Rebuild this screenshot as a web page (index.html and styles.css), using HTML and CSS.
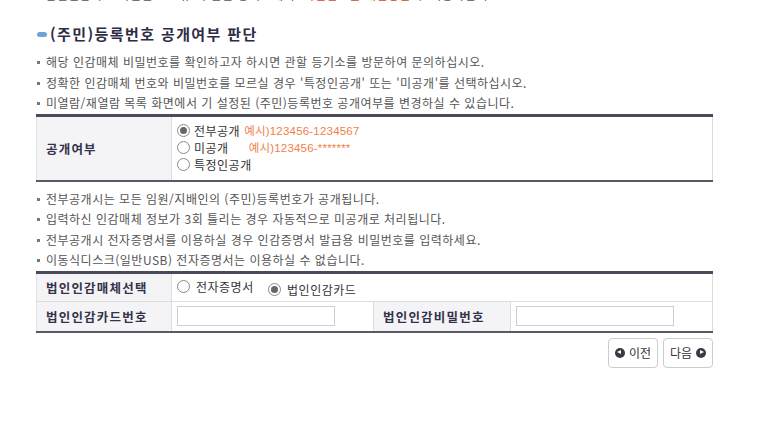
FILE: index.html
```html
<!DOCTYPE html>
<html lang="ko">
<head>
    <meta charset="UTF-8">
    <title>(주민)등록번호 공개여부 판단</title>
    <link rel="stylesheet" href="styles.css">
</head>
<body>
    <div class="page">
        <p class="cut-line"><span class="dot"></span>법인인감카드 비밀번호 오류 시 관할 등기소에서 <em>비밀번호를 재설정한 후</em> 이용하십시오.</p>

        <h3 class="sec-title"><span class="pill"></span>(주민)등록번호 공개여부 판단</h3>

        <ul class="notes">
            <li>해당 인감매체 비밀번호를 확인하고자 하시면 관할 등기소를 방문하여 문의하십시오.</li>
            <li>정확한 인감매체 번호와 비밀번호를 모르실 경우 '특정인공개' 또는 '미공개'를 선택하십시오.</li>
            <li>미열람/재열람 목록 화면에서 기 설정된 (주민)등록번호 공개여부를 변경하실 수 있습니다.</li>
        </ul>

        <table class="form-table open-table">
            <colgroup>
                <col class="c-label">
                <col>
            </colgroup>
            <tr>
                <th>공개여부</th>
                <td>
                    <label class="opt"><input type="radio" name="open" checked>전부공개 <span class="ex">예시)123456-1234567</span></label>
                    <label class="opt"><input type="radio" name="open">미공개 <span class="ex ex2">예시)123456-*******</span></label>
                    <label class="opt"><input type="radio" name="open">특정인공개</label>
                </td>
            </tr>
        </table>

        <ul class="notes notes2">
            <li>전부공개시는 모든 임원/지배인의 (주민)등록번호가 공개됩니다.</li>
            <li>입력하신 인감매체 정보가 3회 틀리는 경우 자동적으로 미공개로 처리됩니다.</li>
            <li>전부공개시 전자증명서를 이용하실 경우 인감증명서 발급용 비밀번호를 입력하세요.</li>
            <li>이동식디스크(일반USB) 전자증명서는 이용하실 수 없습니다.</li>
        </ul>

        <table class="form-table card-table">
            <colgroup>
                <col class="c-label">
                <col class="c-field">
                <col class="c-label2">
                <col>
            </colgroup>
            <tr class="row-media">
                <th>법인인감매체선택</th>
                <td colspan="3" class="media">
                    <label class="opt-inline"><input type="radio" name="media">전자증명서</label>
                    <label class="opt-inline"><input type="radio" name="media" checked>법인인감카드</label>
                </td>
            </tr>
            <tr class="row-card">
                <th>법인인감카드번호</th>
                <td class="field"><input type="text" class="txt"></td>
                <th class="th2">법인인감비밀번호</th>
                <td class="field"><input type="password" class="txt"></td>
            </tr>
        </table>

        <div class="btns">
            <button class="btn"><span class="ico prev"></span>이전</button>
            <button class="btn">다음<span class="ico next"></span></button>
        </div>
    </div>
</body>
</html>
```

FILE: styles.css
```css
body {
    margin: 0;
    font-family: "Noto Sans CJK KR", "Noto Sans", sans-serif;
    font-size: 12px;
    color: #555;
    background-color: #fff;
}

.page {
    width: 677px;
    padding-left: 36px;
}

.cut-line {
    margin: -15px 0 0;
    height: 20px;
    line-height: 20px;
    display: flex;
    align-items: center;
    white-space: nowrap;
    letter-spacing: 0.5px;
}

.cut-line em {
    font-style: normal;
    color: #d04a30;
    margin: 0 4px 0 8px;
}

.dot {
    display: inline-block;
    width: 3px;
    height: 3px;
    background-color: #777;
    margin-right: 6px;
}

.sec-title {
    margin: 18px 0 0;
    height: 22px;
    line-height: 22px;
    font-size: 15px;
    font-weight: bold;
    color: #2e2c44;
    letter-spacing: 1.4px;
    display: flex;
    align-items: center;
}

.pill {
    display: inline-block;
    width: 10px;
    height: 5px;
    border-radius: 3px;
    background-color: #6fa3d8;
    margin: 0 3px 0 1px;
}

.notes {
    list-style: none;
    margin: 7px 0 0;
    padding: 0;
}

.notes li {
    height: 20.5px;
    line-height: 20px;
    padding-left: 10px;
    position: relative;
    letter-spacing: 0.5px;
    white-space: nowrap;
}

.notes li::before {
    content: "";
    position: absolute;
    left: 1px;
    top: 9px;
    width: 3px;
    height: 3px;
    background-color: #777;
}

.notes2 {
    margin-top: 7px;
}

/* form tables */
.form-table {
    width: 677px;
    table-layout: fixed;
    border-collapse: collapse;
    border-top: 3px solid #4b4a5b;
    border-bottom: 2px solid #5a5a66;
    border-right: 1px solid #dcdcdc;
}

.c-label {
    width: 135px;
}

.c-field {
    width: 202px;
}

.c-label2 {
    width: 137px;
}

.form-table th {
    background-color: #f4f4f6;
    border-left: 1px solid #e2e2e6;
    border-right: 1px solid #dcdcdc;
    text-align: left;
    padding: 0 0 0 9px;
    font-size: 12.5px;
    font-weight: bold;
    color: #33324a;
    letter-spacing: 1.2px;
    white-space: nowrap;
}

.form-table td {
    padding: 0 5px;
}

.open-table td {
    padding: 5px 5px 7px;
}

.opt {
    display: flex;
    align-items: center;
    height: 17px;
    font-size: 12px;
    color: #333;
    letter-spacing: 0.5px;
    white-space: nowrap;
}

.ex {
    font-size: 11.5px;
    color: #f07f4a;
    margin-left: 4px;
    letter-spacing: 0.2px;
    font-family: "Liberation Sans", "Noto Sans CJK KR", sans-serif;
}

.ex2 {
    margin-left: 20px;
}

input[type="radio"] {
    appearance: none;
    width: 13px;
    height: 13px;
    margin: 0 4px 0 0;
    border: 1px solid #8a8a8a;
    border-radius: 50%;
    background: #fff;
    box-sizing: border-box;
    display: inline-flex;
    align-items: center;
    justify-content: center;
}

input[type="radio"]:checked::after {
    content: "";
    width: 7px;
    height: 7px;
    border-radius: 50%;
    background-color: #666;
}

.row-media th,
.row-media td {
    height: 26px;
    border-bottom: 1px solid #dcdcdc;
}

.row-card th,
.row-card td {
    height: 29px;
}

.form-table .media {
    padding: 1px 5px 0 5px;
}

.opt-inline {
    display: inline-flex;
    align-items: center;
    margin-right: 11px;
    color: #333;
    font-size: 12px;
    letter-spacing: 0.5px;
}

.opt-inline input {
    margin-right: 6px;
}

.form-table .field {
    padding-left: 5px;
}

.form-table .th2 {
    border-left: 1px solid #dcdcdc;
}

.txt {
    width: 158px;
    height: 20px;
    border: 1px solid #cfcfcf;
    box-sizing: border-box;
    display: block;
}

.btns {
    display: flex;
    justify-content: flex-end;
    gap: 5px;
    margin-top: 5px;
}

.btn {
    width: 50px;
    height: 30px;
    border: 1px solid #cccccc;
    border-radius: 4px;
    background-color: #fff;
    font-family: "Noto Sans CJK KR", sans-serif;
    font-size: 12px;
    color: #333;
    display: flex;
    align-items: center;
    justify-content: center;
    gap: 4px;
    padding: 0;
}

.ico {
    width: 10px;
    height: 10px;
    border-radius: 50%;
    background-color: #3a3a44;
    position: relative;
}

.ico::after {
    content: "";
    position: absolute;
    top: 2.5px;
    border-top: 2.5px solid transparent;
    border-bottom: 2.5px solid transparent;
}

.prev::after {
    left: 2.5px;
    border-right: 4px solid #fff;
}

.next::after {
    left: 3.5px;
    border-left: 4px solid #fff;
}
```
